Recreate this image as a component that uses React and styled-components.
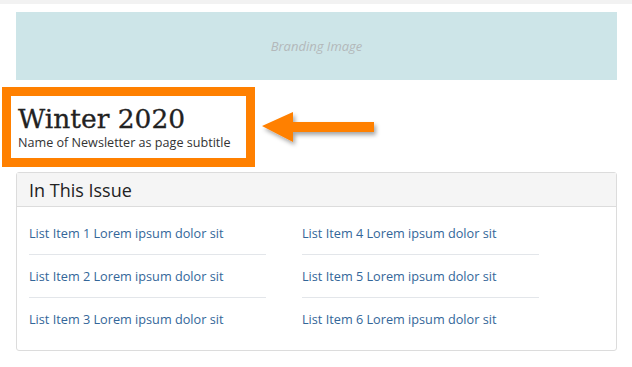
import React from 'react';
import styled, { createGlobalStyle } from 'styled-components';

const GlobalStyle = createGlobalStyle`
    body {
        margin: 0;
        background: #fff;
        font-family: "Open Sans", "Liberation Sans", sans-serif;
    }
`;

const TopStrip = styled.div`
    height: 4px;
    background: #f2f2f2;
`;

const Page = styled.div`
    padding: 8px 15px 0 16px;
`;

const Branding = styled.div`
    height: 68px;
    background: #cde5e8;
    display: flex;
    align-items: center;
    justify-content: center;
    color: #b3b8ba;
    font-style: italic;
    font-size: 13px;
`;

const TitleRow = styled.div`
    display: flex;
    align-items: center;
    margin: 7px 0 0 -14px;
`;

const TitleBox = styled.div`
    width: 228px;
    height: 62px;
    border: 9px solid #ff8000;
    padding: 0 0 0 7px;
    display: flex;
    flex-direction: column;
    justify-content: center;
`;

const Title = styled.h1`
    margin: 0;
    font-family: "DejaVu Serif", "Liberation Serif", serif;
    font-weight: 400;
    font-size: 26.5px;
    line-height: 31px;
    color: #222;
    -webkit-text-stroke: 0.3px #222;
`;

const Subtitle = styled.div`
    font-size: 12.6px;
    line-height: 17px;
    color: #333;
    white-space: nowrap;
`;

const Arrow = styled.svg`
    margin-left: 7px;
    margin-top: 2px;
    overflow: visible;
`;

const Panel = styled.section`
    margin-top: 5px;
    border: 1px solid #dcdcdc;
    border-radius: 3px;
`;

const PanelHeader = styled.div`
    height: 33px;
    background: #f5f5f5;
    border-bottom: 1px solid #dcdcdc;
    padding: 0 12px;
    display: flex;
    align-items: center;
    font-size: 18px;
    color: #222;
`;

const List = styled.div`
    display: grid;
    grid-template-columns: 237px 237px;
    grid-auto-flow: column;
    grid-template-rows: repeat(3, auto);
    column-gap: 36px;
    padding: 5px 12px 10px;
`;

const Item = styled.a`
    display: block;
    padding: 12px 0;
    line-height: 18px;
    font-size: 12.7px;
    color: #336699;
    text-decoration: none;
    border-bottom: ${p => (p.$last ? 'none' : '1px solid #e3e6ea')};
`;

const items = [1, 2, 3, 4, 5, 6];

export default function App() {
    return (
        <>
            <GlobalStyle />
            <TopStrip />
            <Page>
                <Branding>Branding Image</Branding>
                <TitleRow>
                    <TitleBox>
                        <Title>Winter 2020</Title>
                        <Subtitle>Name of Newsletter as page subtitle</Subtitle>
                    </TitleBox>
                    <Arrow width="114" height="32" viewBox="0 0 114 32">
                        <defs>
                            <filter id="sh" x="-20%" y="-40%" width="150%" height="200%">
                                <feDropShadow dx="2" dy="3" stdDeviation="2" floodColor="#000" floodOpacity="0.35" />
                            </filter>
                        </defs>
                        <path
                            d="M0 14 L31 0 L31 10 L112 10 L112 20 L31 20 L31 30 Z"
                            fill="#ff8000"
                            filter="url(#sh)"
                        />
                    </Arrow>
                </TitleRow>
                <Panel>
                    <PanelHeader>In This Issue</PanelHeader>
                    <List>
                        {items.map(n => (
                            <Item key={n} href="#" $last={n % 3 === 0}>
                                List Item {n} Lorem ipsum dolor sit
                            </Item>
                        ))}
                    </List>
                </Panel>
            </Page>
        </>
    );
}
